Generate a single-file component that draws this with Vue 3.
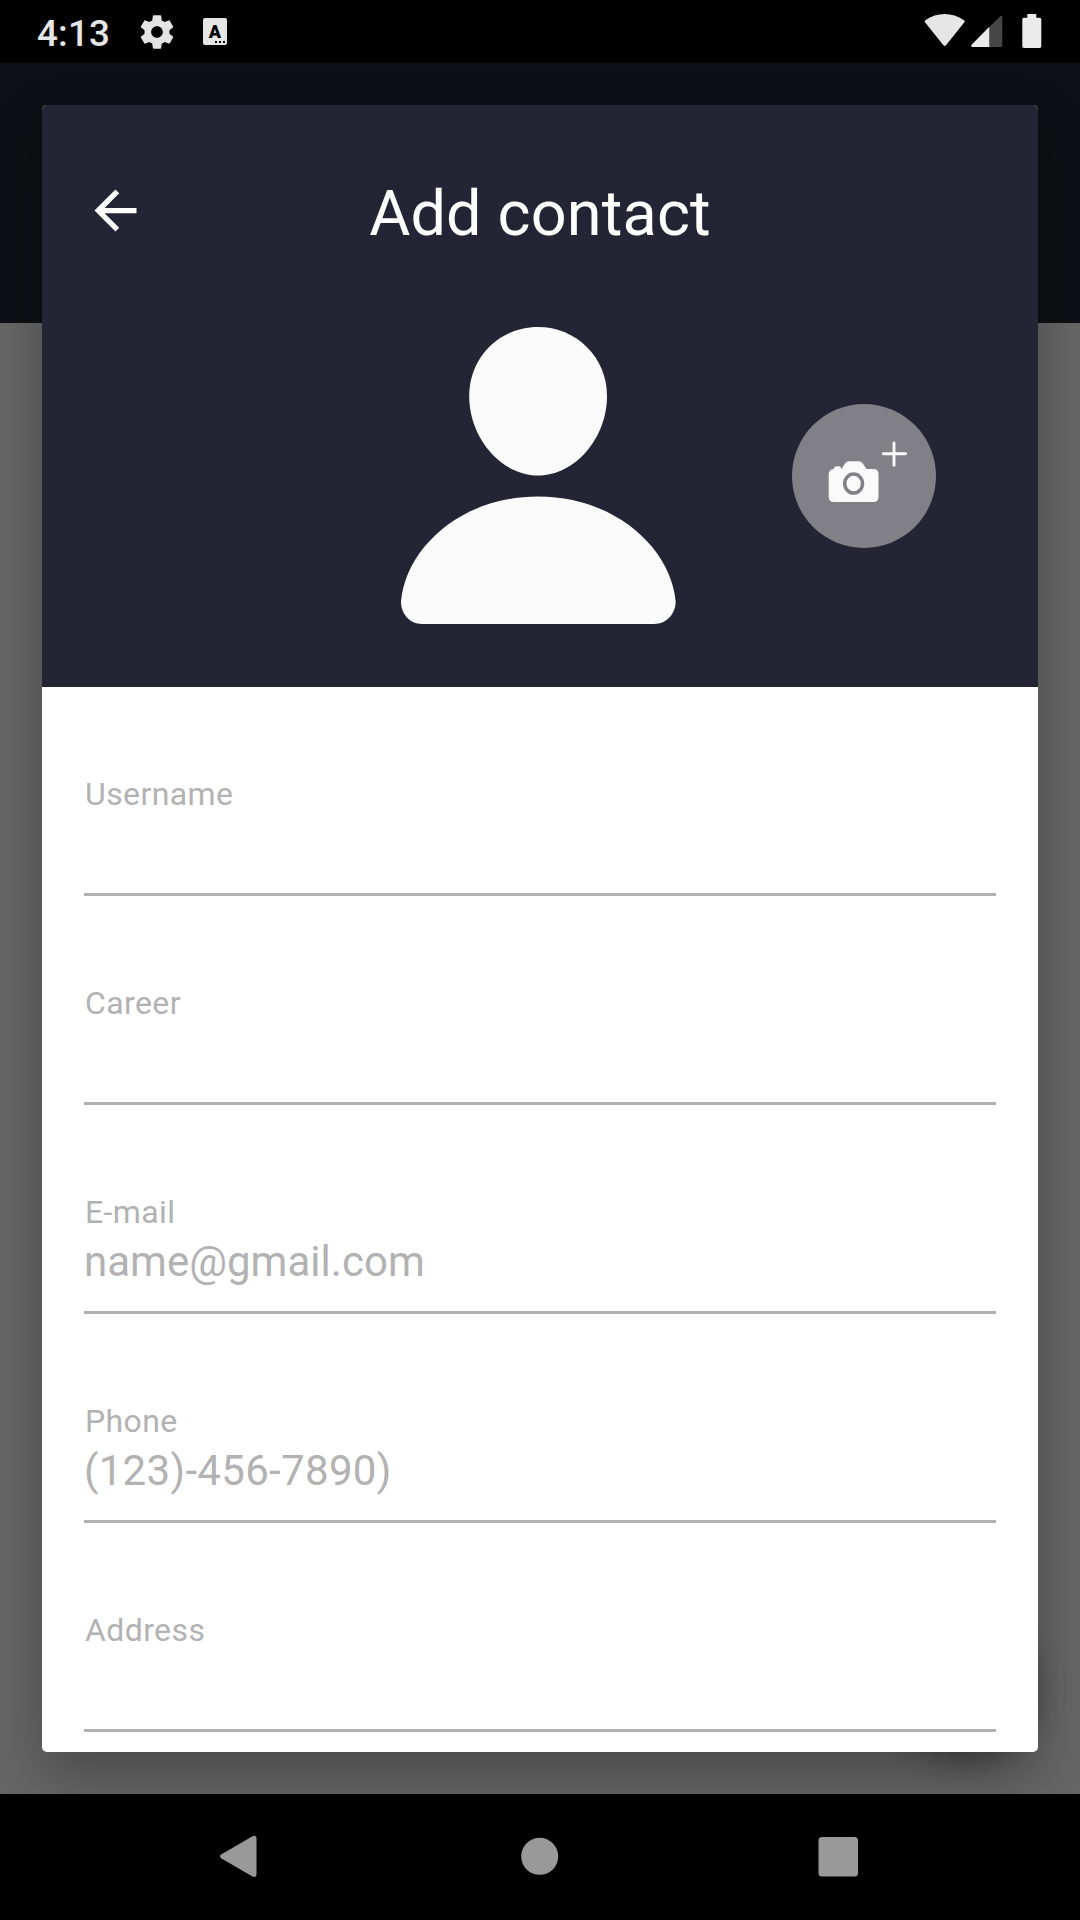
<script setup>
const fields = [
  { label: 'Username', hint: '' },
  { label: 'Career', hint: '' },
  { label: 'E-mail', hint: 'name@gmail.com' },
  { label: 'Phone', hint: '(123)-456-7890)', numeric: true },
  { label: 'Address', hint: '' },
]
</script>

<template>
  <div class="screen">
    <header class="status">
      <div class="status-left">
        <span class="time">4:13</span>
        <svg class="gear" width="40" height="40" viewBox="0 0 24 24" fill="#e4e4e4">
          <path d="M19.43 12.98c.04-.32.07-.64.07-.98s-.03-.66-.07-.98l2.11-1.65c.19-.15.24-.42.12-.64l-2-3.46c-.12-.22-.39-.3-.61-.22l-2.49 1c-.52-.4-1.08-.73-1.69-.98l-.38-2.65C14.46 2.18 14.25 2 14 2h-4c-.25 0-.46.18-.49.42l-.38 2.65c-.61.25-1.17.59-1.69.98l-2.49-1c-.23-.09-.49 0-.61.22l-2 3.46c-.13.22-.07.49.12.64l2.11 1.65c-.04.32-.07.65-.07.98s.03.66.07.98l-2.11 1.65c-.19.15-.24.42-.12.64l2 3.46c.12.22.39.3.61.22l2.49-1c.52.4 1.08.73 1.69.98l.38 2.65c.03.24.24.42.49.42h4c.25 0 .46-.18.49-.42l.38-2.65c.61-.25 1.17-.59 1.69-.98l2.49 1c.23.09.49 0 .61-.22l2-3.46c.12-.22.07-.49-.12-.64l-2.11-1.65zM12 15.5c-1.93 0-3.5-1.57-3.5-3.5s1.57-3.5 3.5-3.5 3.5 1.57 3.5 3.5-1.57 3.5-3.5 3.5z" />
        </svg>
        <span class="ime">A<i /><i /><i /></span>
      </div>
      <div class="status-right">
        <svg width="42" height="34" viewBox="0 0 42 34" fill="#e6e6e6">
          <path d="M1.2 8.6Q0 7.2 1.4 6.2C13-2 28-2 40 6.2q1.4 1 .2 2.4L22 31.2q-1.3 1.6-2.6 0z" />
        </svg>
        <svg class="signal" width="32" height="34" viewBox="0 0 32 34">
          <path d="M18.3 13 29.3 2.3Q31.3 1 31.3 3.3V31.3q0 1.7-1.5 1.7H18.3z" fill="#464646" />
          <path d="M18.3 12.8V33H1.6Q-.6 33 .8 30.6z" fill="#ebebeb" />
        </svg>
        <svg class="battery" width="20" height="34" viewBox="0 0 20 34" fill="#ebebeb">
          <path d="M5.3 0h9v3.7h3.4q1.6 0 1.6 1.6v27q0 1.6-1.6 1.6H1.9Q.3 33.9.3 32.3V5.3Q.3 3.7 1.9 3.7h3.4z" />
        </svg>
      </div>
    </header>

    <main class="backdrop">
      <div class="underbar" />
      <div class="fab-shadow" />
      <section class="dialog">
        <div class="hero">
          <div class="toolbar">
            <svg class="back" width="63" height="63" viewBox="0 0 24 24" fill="#fff">
              <path d="M20 11H7.83l5.59-5.59L12 4l-8 8 8 8 1.41-1.41L7.83 13H20v-2z" />
            </svg>
            <h1>Add contact</h1>
          </div>
          <div class="photo">
            <svg width="275" height="297" viewBox="401 327 275 297" fill="#fafafa">
              <path d="M538 327C500 327 469.2 357 469.2 396C469.2 438 501 475.5 538 475.5S607 438 607 396C607 357 576 327 538 327z" />
              <path d="M401 601C406 548 461 496.5 538 496.5S670.5 548 675.6 601C676 613 667 624 654 624H422C409 624 400.7 613 401 601z" />
            </svg>
            <button class="camera" aria-label="Add photo">
              <svg width="144" height="144" viewBox="0 0 144 144">
                <path d="M36.7 70.5Q36.7 65.3 41.7 65Q42.2 62.2 44 62.2H47Q49.2 62.2 49.2 65H49.6L53 59.5Q54.5 57.2 57.5 57.2H66.5Q69.3 57.2 70.8 59.5L74.5 65H81.5Q86.5 65 86.5 70.5V92.5Q86.5 98 81.5 98H42Q36.7 98 36.7 92.5z" fill="#fafafa" />
                <ellipse cx="61.6" cy="79.6" rx="8.9" ry="9.5" fill="none" stroke="#828087" stroke-width="3.5" />
                <path d="M102 39v22.3M91.3 49.7h22.4" stroke="#fafafa" stroke-width="2.9" stroke-linecap="round" />
              </svg>
            </button>
          </div>
        </div>
        <form class="form">
          <label v-for="f in fields" :key="f.label" class="field">
            <span class="label">{{ f.label }}</span>
            <span class="hint" :class="{ numeric: f.numeric }">{{ f.hint }}</span>
          </label>
        </form>
      </section>
    </main>

    <nav class="nav">
      <span><svg width="48" height="48" viewBox="0 0 48 48" fill="#999">
        <path d="M4.5 20.2 35.5 2.2Q39.5.4 39.5 4.4V39.9Q39.5 44 35.5 42.5L4.5 24.6Q1.5 22.4 4.5 20.2z" />
      </svg></span>
      <span><svg width="48" height="48" viewBox="0 0 48 48" fill="#999"><circle cx="23.7" cy="22.3" r="18.5" /></svg></span>
      <span><svg width="48" height="48" viewBox="0 0 48 48" fill="#999"><rect x="3.5" y="3" width="39.5" height="39.5" rx="3.5" /></svg></span>
    </nav>
  </div>
</template>

<style>
body {
  margin: 0;
  background: #000;
}
</style>

<style scoped>
.screen {
  width: 1080px;
  height: 1920px;
  display: flex;
  flex-direction: column;
  overflow: hidden;
  background: #000;
  font-family: Roboto, "Liberation Sans", sans-serif;
}
.status {
  height: 63px;
  flex: none;
  display: flex;
  justify-content: space-between;
  color: #e6e6e6;
}
.status-left {
  display: flex;
  padding-left: 37px;
}
.time {
  width: 100px;
  font-size: 36.75px;
  font-weight: 500;
  line-height: 43px;
  letter-spacing: 0.2px;
  padding-top: 12px;
}
.gear {
  margin-top: 12px;
}
.ime {
  box-sizing: border-box;
  width: 24px;
  height: 27px;
  margin: 18px 0 0 26px;
  border-radius: 2px;
  background: #e6e6e6;
  color: #000;
  font-size: 18px;
  font-weight: 900;
  line-height: 27px;
  text-align: center;
  position: relative;
}
.ime i {
  position: absolute;
  top: 23px;
  left: 20px;
  width: 2px;
  height: 2px;
  background: #000;
}
.ime i:nth-child(2) {
  left: 16px;
}
.ime i:nth-child(3) {
  left: 12px;
}
.status-right {
  display: flex;
  padding: 14px 38px 0 0;
}
.signal {
  margin-left: 5px;
}
.battery {
  margin-left: 19px;
}
.backdrop {
  box-sizing: border-box;
  height: 1731px;
  flex: none;
  padding: 42px;
  background: #666;
  position: relative;
  overflow: hidden;
}
.underbar {
  position: absolute;
  inset: 0 0 auto 0;
  height: 260px;
  background: #0f1015;
}
.fab-shadow {
  position: absolute;
  right: 42px;
  bottom: 42px;
  width: 147px;
  height: 147px;
  border-radius: 50%;
  box-shadow: 0 12px 28px rgba(0, 0, 0, 0.27);
}
.dialog {
  position: relative;
  height: 1647px;
  border-radius: 5px;
  background: #fff;
  box-shadow: 0 24px 56px rgba(0, 0, 0, 0.28);
  overflow: hidden;
}
.hero {
  height: 582px;
  background: #252435;
}
.toolbar {
  display: grid;
  grid-template-columns: 63px 1fr 63px;
  align-items: start;
  padding: 72px 42px 0;
}
.back {
  margin-top: 2px;
}
h1 {
  margin: 0;
  color: #fff;
  font-size: 63px;
  font-weight: 400;
  line-height: 74px;
  letter-spacing: 0.15px;
  text-align: center;
}
.photo {
  display: flex;
  align-items: center;
  padding: 76px 0 0 359px;
}
.camera {
  display: block;
  width: 144px;
  height: 144px;
  margin-left: 116px;
  padding: 0;
  border: 0;
  border-radius: 50%;
  background: #828087;
}
.camera svg {
  display: block;
}
.form {
  padding: 0 42px;
}
.field {
  box-sizing: border-box;
  display: flex;
  flex-direction: column;
  gap: 6px;
  height: 209px;
  padding-top: 89px;
  border-bottom: 3px solid #b0b0b0;
  color: #b2b2b2;
}
.label {
  padding-left: 1px;
  font-size: 32px;
  line-height: 37px;
  letter-spacing: 0.4px;
}
.hint {
  height: 49px;
  font-size: 42px;
  line-height: 49px;
  letter-spacing: 0.03px;
}
.hint.numeric {
  letter-spacing: 0.32px;
}
.nav {
  height: 126px;
  flex: none;
  display: grid;
  grid-template-columns: repeat(3, 299px);
  justify-content: center;
  background: #000;
  padding-right: 1px;
}
.nav span {
  display: flex;
  justify-content: center;
  padding-top: 40px;
}
</style>
